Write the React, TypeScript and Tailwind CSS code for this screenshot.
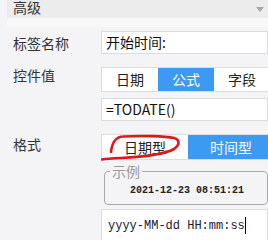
import React from "react";

const LABEL = "w-[101px] shrink-0 pl-[13px] text-[14px] leading-[18px] text-[#333]";

function Segmented({
  items,
  active,
  widthClass,
  heightClass,
}: {
  items: string[];
  active: number;
  widthClass: string;
  heightClass: string;
}) {
  return (
    <div className={`flex ${heightClass} border border-[#dcdcdc] bg-white`}>
      {items.map((item, i) => (
        <div
          key={item}
          className={`${widthClass} flex items-center justify-center text-[14px] ${
            i === active ? "bg-[#3d9af2] text-white" : "text-[#222]"
          }`}
        >
          {item}
        </div>
      ))}
    </div>
  );
}

export default function App() {
  return (
    <div className="w-[268px] h-[240px] overflow-hidden bg-[#f4f4f6] font-['Noto_Sans_CJK_SC','Noto_Sans',sans-serif] text-[#333]">
      {/* section header, cut off at the top */}
      <div className="ml-[7px] -mt-[4px] h-[22px] bg-[#ececec] flex items-center justify-between pl-[6px] pr-[4px]">
        <span className="text-[14px] text-[#333]">高级</span>
        <span className="w-0 h-0 border-l-[4px] border-r-[4px] border-t-[5px] border-l-transparent border-r-transparent border-t-[#a8a8a8] mt-[4px]" />
      </div>
      <div className="ml-[7px] h-[9px] bg-[#f8f8f8]" />

      <div className="flex flex-col pt-[4px]">
        {/* 标签名称 */}
        <div className="flex items-center">
          <div className={LABEL}>标签名称</div>
          <div className="w-[180px] h-[23px] border border-[#dcdcdc] bg-white flex items-center pl-[4px] text-[14px] text-[#111]">
            开始时间:
          </div>
        </div>

        {/* 控件值 */}
        <div className="flex items-start mt-[13px]">
          <div className={`${LABEL} -mt-[1px]`}>控件值</div>
          <div className="w-[180px]">
            <Segmented items={["日期", "公式", "字段"]} active={1} widthClass="w-[56px]" heightClass="h-[25px]" />
          </div>
        </div>

        <div className="flex mt-[6px]">
          <div className="w-[101px] shrink-0" />
          <div className="w-[180px] h-[23px] border border-[#dcdcdc] bg-white flex items-center pl-[4px] text-[14px] text-[#111]">
            =TODATE()
          </div>
        </div>

        {/* 格式 */}
        <div className="flex items-start mt-[13px]">
          <div className={`${LABEL} mt-[1px]`}>格式</div>
          <div className="w-[180px] relative">
            <Segmented items={["日期型", "时间型"]} active={1} widthClass="w-[86px]" heightClass="h-[26px]" />
            <svg
              className="absolute left-0 top-0 pointer-events-none"
              width="90"
              height="30"
              viewBox="0 0 90 30"
            >
              <path
                d="M10 18 C 11 9, 15 2.5, 22 2.5 C 40 1.5, 64 2, 73 4 C 79 5.5, 79 11, 73 15 C 62 21, 40 23, 20 24 C 10 24.5, 4 25, 1 25.5"
                fill="none"
                stroke="#e3141b"
                strokeWidth="2.6"
                strokeLinecap="round"
              />
            </svg>
          </div>
        </div>

        {/* 示例 */}
        <div className="flex mt-[3px]">
          <div className="w-[104px] shrink-0" />
          <fieldset className="w-[180px] border border-[#a9a9a9] rounded-[4px] px-[5px] pt-[6px] pb-[7px] m-0">
            <legend className="px-[2px] text-[14px] leading-[16px] text-[#9a9a9a]">示例</legend>
            <div className="pl-[20px] font-['Liberation_Mono',monospace] font-bold text-[10px] leading-[12px] text-[#222]">
              2021-12-23 08:51:21
            </div>
          </fieldset>
        </div>

        {/* format input */}
        <div className="flex mt-[4px]">
          <div className="w-[101px] shrink-0" />
          <div className="w-[180px] h-[34px] border border-[#dcdcdc] bg-white flex items-center pl-[6px] pb-[1px]">
            <span className="font-['Liberation_Mono',monospace] text-[12px] text-[#1a1a3a]">yyyy-MM-dd HH:mm:ss</span>
            <span className="w-[1px] h-[17px] bg-black" />
          </div>
        </div>
      </div>
    </div>
  );
}
